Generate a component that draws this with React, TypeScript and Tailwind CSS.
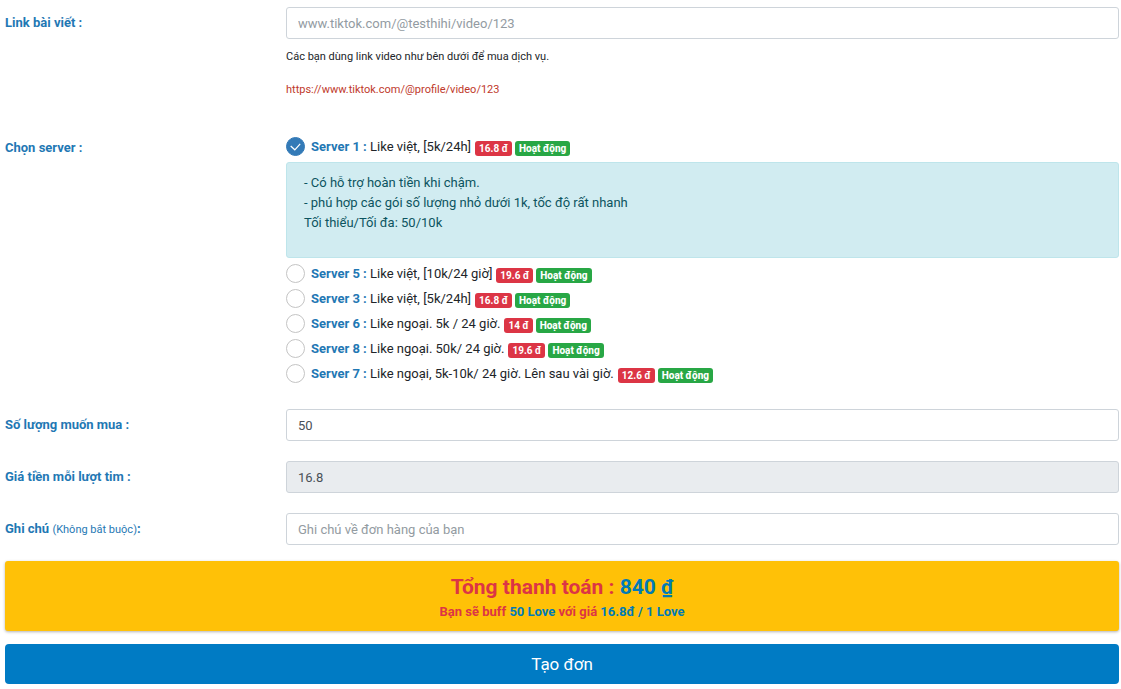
import { useState, type ReactNode } from "react";

type Server = { id: number; text: string; price: string };

const servers: Server[] = [
  { id: 1, text: "Like việt, [5k/24h]", price: "16.8" },
  { id: 5, text: "Like việt, [10k/24 giờ]", price: "19.6" },
  { id: 3, text: "Like việt, [5k/24h]", price: "16.8" },
  { id: 6, text: "Like ngoại. 5k / 24 giờ.", price: "14" },
  { id: 8, text: "Like ngoại. 50k/ 24 giờ.", price: "19.6" },
  { id: 7, text: "Like ngoại, 5k-10k/ 24 giờ. Lên sau vài giờ.", price: "12.6" },
];

const field =
  "block h-8 w-full rounded-[3px] border border-[#ced4da] px-[11px] text-[13px] text-[#495057] placeholder:text-[#939ba2] outline-none focus:border-[#80bdff]";

function Row({ label, htmlFor, children }: { label: ReactNode; htmlFor: string; children: ReactNode }) {
  return (
    <div className="grid grid-cols-4 gap-2.5">
      <label htmlFor={htmlFor} className="pt-1.5 font-bold text-[#1f78b4]">
        {label}
      </label>
      <div className="col-span-3">{children}</div>
    </div>
  );
}

function ServerOption({ server, checked, onSelect }: { server: Server; checked: boolean; onSelect: () => void }) {
  return (
    <label htmlFor={`server-${server.id}`} className="flex h-[25px] cursor-pointer items-center">
      <span className="relative mr-1.5 h-[19px] w-[19px] shrink-0">
        <input
          id={`server-${server.id}`}
          type="radio"
          name="server"
          checked={checked}
          onChange={onSelect}
          className="block h-[19px] w-[19px] appearance-none rounded-full border border-[#c4c4c4] bg-white checked:border-[#337ab7] checked:bg-[#337ab7]"
        />
        {checked && (
          <svg viewBox="0 0 19 19" className="pointer-events-none absolute inset-0 h-[19px] w-[19px]" fill="none" stroke="#fff" strokeWidth="1.2">
            <path d="M4.7 9 8.8 12.8 14.2 6.8" />
          </svg>
        )}
      </span>
      <span className="whitespace-pre">
        <b className="text-[#1f78b4]">Server {server.id} : </b>
        {server.text}
      </span>
      <span className="mt-1 ml-1 rounded-[3px] bg-[#dc3545] px-1 text-[10px] leading-[15px] font-bold text-white">
        {server.price} đ
      </span>
      <span className="mt-1 ml-[3px] rounded-[3px] bg-[#28a745] px-1 text-[10px] leading-[15px] font-extrabold text-white">
        Hoạt động
      </span>
    </label>
  );
}

export default function App() {
  const [selected, setSelected] = useState(1);
  const [link, setLink] = useState("");
  const [quantity, setQuantity] = useState("50");
  const [note, setNote] = useState("");
  const price = servers.find((s) => s.id === selected)!.price;
  const total = Math.round(Number(quantity) * Number(price) * 10) / 10;

  return (
    <form
      onSubmit={(e) => e.preventDefault()}
      className="bg-white pt-[7px] pr-0.5 pb-[5px] pl-[5px] font-[Roboto,sans-serif] text-[13px] leading-5 text-[#212529]"
    >
      <Row label="Link bài viết :" htmlFor="link">
        <input
          id="link"
          className={field}
          placeholder="www.tiktok.com/@testhihi/video/123"
          value={link}
          onChange={(e) => setLink(e.target.value)}
        />
        <p className="mt-2 text-[11px]">Các bạn dùng link video như bên dưới để mua dịch vụ.</p>
        <p className="mt-[13px] text-[11px] text-[#c0392b]">https://www.tiktok.com/@profile/video/123</p>
      </Row>

      <div role="radiogroup" aria-labelledby="server-label" className="mt-[34px] grid grid-cols-4 gap-2.5">
        <div id="server-label" className="pt-1 font-bold text-[#1f78b4]">
          Chọn server :
        </div>
        <div className="col-span-3">
          {servers.map((s) => (
            <div key={s.id}>
              <ServerOption server={s} checked={selected === s.id} onSelect={() => setSelected(s.id)} />
              {s.id === 1 && (
                <div className="my-[3px] h-24 rounded-[3px] border border-[#bee5eb] bg-[#d1ecf1] px-[17px] pt-[10px] text-[#0c5460]">
                  <p>- Có hỗ trợ hoàn tiền khi chậm.</p>
                  <p>- phú hợp các gói số lượng nhỏ dưới 1k, tốc độ rất nhanh</p>
                  <p>Tối thiểu/Tối đa: 50/10k</p>
                </div>
              )}
            </div>
          ))}
        </div>
      </div>

      <div className="mt-[23px] space-y-5">
        <Row label="Số lượng muốn mua :" htmlFor="quantity">
          <input
            id="quantity"
            inputMode="numeric"
            className={field}
            value={quantity}
            onChange={(e) => setQuantity(e.target.value)}
          />
        </Row>
        <Row label="Giá tiền mỗi lượt tim :" htmlFor="price">
          <input id="price" readOnly className={`${field} bg-[#e9ecef]`} value={price} />
        </Row>
        <Row
          label={
            <>
              Ghi chú <span className="text-[11px] font-normal">(Không bắt buộc)</span>:
            </>
          }
          htmlFor="note"
        >
          <input
            id="note"
            className={field}
            placeholder="Ghi chú về đơn hàng của bạn"
            value={note}
            onChange={(e) => setNote(e.target.value)}
          />
        </Row>
      </div>

      <div className="mt-4 rounded-[3px] bg-[#ffc107] pt-[11px] pb-[9px] text-center font-bold text-[#dc3545] shadow-[0_1px_3px_rgba(0,0,0,0.3)]">
        <h3 className="text-[21px] leading-[30px]">
          Tổng thanh toán : <span className="text-[#007bb6]">{total} ₫</span>
        </h3>
        <p>
          Bạn sẽ buff <span className="text-[#007bb6]">{quantity} Love</span> với giá{" "}
          <span className="text-[#007bb6]">{price}đ / 1 Love</span>
        </p>
      </div>

      <button type="submit" className="mt-[13px] block h-10 w-full cursor-pointer rounded bg-[#007bc4] text-[17px] text-white">
        Tạo đơn
      </button>
    </form>
  );
}
